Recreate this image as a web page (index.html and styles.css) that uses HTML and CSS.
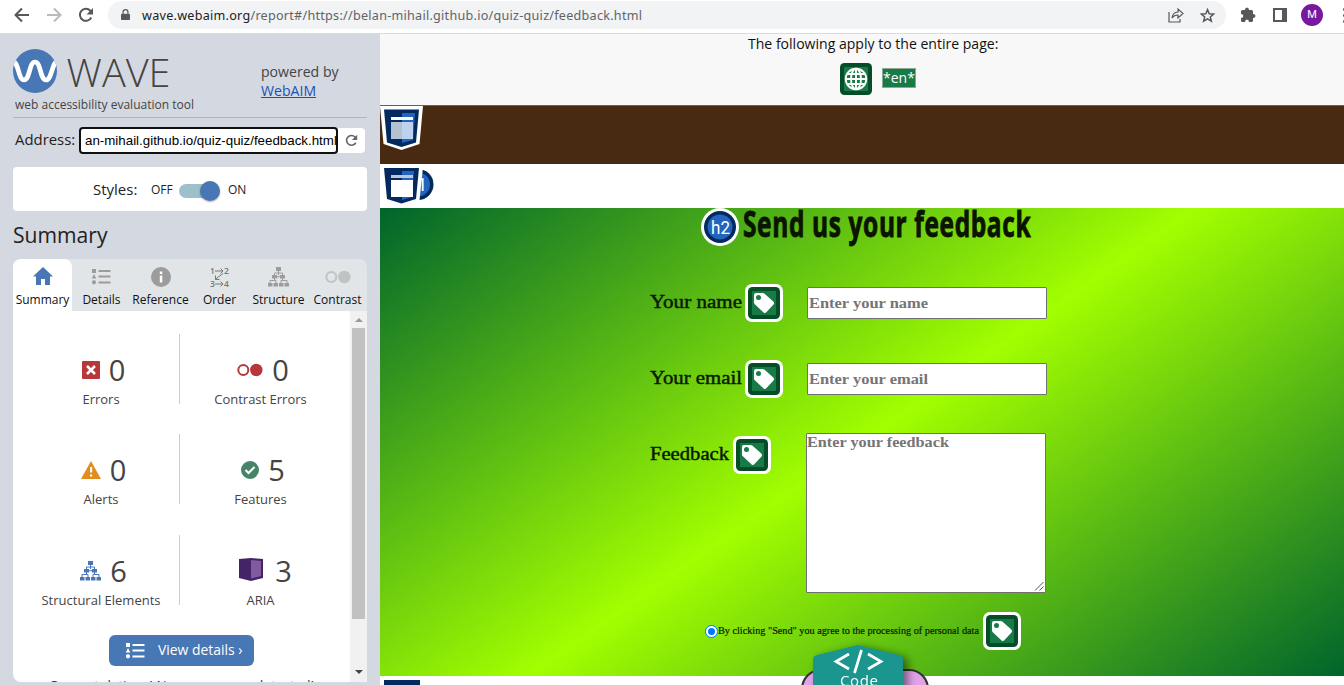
FILE: index.html
```html
<!DOCTYPE html>
<html lang="en">
<head>
<meta charset="utf-8">
<title>WAVE Report</title>
<link rel="stylesheet" href="styles.css">
</head>
<body>
<svg class="defs" width="0" height="0">
  <defs>
    <symbol id="list" viewBox="0 0 19 17"><path d="M0 1h4v4H0zM6.500 2h12v2h-12zM2 6l2.300 4.500H-.3zM6.500 7.500h12v2h-12zM6.500 13.500h12v2h-12z"/><circle cx="2" cy="14.300" r="2.100"/></symbol>
    <symbol id="tree" viewBox="0 0 21 20"><path d="M8 0h5v4H8zM4 8h5v3.500H4zM12 8h5v3.500h-5zM0 16h4.500v3.500H0zM5.500 16H10v3.500H5.500zM11 16h4.500v3.500H11zM16.500 16H21v3.500h-4.500z"/><path d="M10.500 4v4M6.500 8V6h8v2M6.500 11v3M14.500 11v3M2 16v-2.500h6V16M13 16v-2.500h6V16M8 9.700h5" fill="none" stroke="currentColor"/></symbol>
    <symbol id="pair" viewBox="0 0 26 14"><circle cx="6.300" cy="7" r="5" fill="none" stroke="currentColor" stroke-width="2"/><circle cx="19.300" cy="7" r="6.200"/></symbol>
    <symbol id="tag" viewBox="0 0 38 38"><rect width="38" height="38" rx="7" fill="#fff"/><rect x="3" y="3" width="32" height="32" rx="4.500" fill="#044d27"/><rect x="7" y="7" width="24" height="24" fill="#187a47"/><path fill="#fff" d="M9 11q0-2 2-2h6.500q1 0 1.800.6l9 8q1.500 1.400.2 2.800l-7.200 7.900q-1.200 1.300-2.700.2L9.800 20.300Q9 19.500 9 18.500z"/><circle cx="13.500" cy="13.500" r="2.500" fill="#187a47"/></symbol>
    <symbol id="back" viewBox="0 0 16 16"><path d="M15 8H2M8 1.500L1.500 8 8 14.500" fill="none" stroke="currentColor" stroke-width="2"/></symbol>
    <symbol id="reload" viewBox="0 0 16 16"><path d="M13.300 10.500A6 6 0 1 1 12.300 3.700L14 5.500" fill="none" stroke="currentColor" stroke-width="2"/><path d="M15 1v6.500H8.500z"/></symbol>
  </defs>
</svg>
<header class="chrome">
  <svg class="nav n1"><use href="#back"/></svg>
  <svg class="nav n2"><use href="#back"/></svg>
  <svg class="nav n3"><use href="#reload"/></svg>
  <div class="omnibox">
    <svg class="lock" viewBox="0 0 10 13"><path d="M1 5h8q1 0 1 1v5q0 1-1 1H1q-1 0-1-1V6q0-1 1-1z"/><path d="M2.300 5V3.300a2.700 2.700 0 0 1 5.400 0V5" fill="none" stroke="currentColor" stroke-width="1.400"/></svg>
    <svg class="url"><text x="0" y="15" textLength="500"><tspan fill="#202124">wave.webaim.org</tspan>/report#/https://belan-mihail.github.io/quiz-quiz/feedback.html</text></svg>
    <svg class="share" viewBox="0 0 16 15"><path d="M1 4v10h11v-3M4 10q.5-5.500 6-6V1l5 4.500-5 4.500V7Q6 7 4 10z" fill="none" stroke="currentColor" stroke-width="1.200"/></svg>
    <svg class="star" viewBox="0 0 14 14"><path d="M7 1.500l1.600 3.800 4.100.3-3.100 2.700 1 4L7 10.200l-3.600 2.100 1-4-3.100-2.700 4.100-.3z" fill="none" stroke="currentColor" stroke-width="1.400"/></svg>
  </div>
  <svg class="puzzle" viewBox="0 0 16 16"><path d="M1 4.500Q1 3 2.500 3H5q0-2.500 2-2.500T9 3h2.500Q13 3 13 4.500V7q2.500 0 2.500 2T13 11v2.500q0 1.500-1.500 1.500H9q0-2.500-2-2.500T5 15H2.500Q1 15 1 13.500V11q2.300 0 2.300-2T1 7z"/></svg>
  <svg class="panel" viewBox="0 0 14 14"><path fill-rule="evenodd" d="M0 0h14v14H0zM2 2v10h7V2z"/></svg>
  <span class="avatar">M</span>
  <span class="more"><i></i><i></i><i></i></span>
</header>
<div class="main">
<aside class="side">
  <div class="brand">
    <div>
      <svg class="logo" viewBox="0 0 158 44"><defs><clipPath id="disc"><circle cx="22" cy="22" r="22"/></clipPath></defs><circle cx="22" cy="22" r="22" fill="#4877b6"/><path clip-path="url(#disc)" d="M-1 12C6 12 5 31 11 31S16 13 22 13s5 18 11 18 6-19 12-19" fill="none" stroke="#fff" stroke-width="4.700"/><text x="53.500" y="38" textLength="104" lengthAdjust="spacingAndGlyphs">WAVE</text></svg>
      <div class="tagline">web accessibility evaluation tool</div>
    </div>
    <div class="powered">powered by<br><a>WebAIM</a></div>
  </div>
  <div class="address"><span class="alabel">Address:</span><span class="field"><span>an-mihail.github.io/quiz-quiz/feedback.html</span></span><span class="go"><svg><use href="#reload"/></svg></span></div>
  <div class="styles"><span class="slabel">Styles:</span><span class="off">OFF</span><span class="switch"><i></i></span><span class="on">ON</span></div>
  <h1>Summary</h1>
  <nav class="tabs">
    <div class="tab active"><svg viewBox="0 0 20 18" width="20" height="18"><path d="M10 0l10 9.500h-3V18h-5v-6H8v6H3V9.500H0z"/></svg><span>Summary</span></div>
    <div class="tab"><svg width="19" height="17"><use href="#list"/></svg><span>Details</span></div>
    <div class="tab"><svg viewBox="0 0 20 20" width="20" height="20"><circle cx="10" cy="10" r="10"/><path d="M8.800 4.500h2.500V7H8.800zM8.800 8.500h2.500v7H8.800z" fill="#fff"/></svg><span>Reference</span></div>
    <div class="tab"><svg class="order" viewBox="0 0 20 20" width="20" height="20"><text x="0" y="7">1</text><text x="14" y="7">2</text><text x="0" y="20">3</text><text x="14" y="20">4</text><path d="M5 4h8M10.500 1.500L13 4l-2.500 2.500M5 17h8M10.500 14.500L13 17l-2.500 2.500M13 6.500l-8 6M5.500 8.500v4h4" fill="none" stroke="currentColor"/></svg><span>Order</span></div>
    <div class="tab"><svg width="21" height="20"><use href="#tree"/></svg><span>Structure</span></div>
    <div class="tab pale"><svg width="26" height="14"><use href="#pair"/></svg><span>Contrast</span></div>
  </nav>
  <div class="pane">
    <div class="content">
      <div class="grid">
        <div class="cell"><div class="num"><svg viewBox="0 0 18 18" width="18" height="18"><rect width="18" height="18" rx="1" fill="#b8373b"/><path d="M5 5l8 8M13 5l-8 8" stroke="#fff" stroke-width="2.500"/></svg><b>0</b></div><p>Errors</p></div>
        <div class="cell"><div class="num red"><svg width="26" height="14"><use href="#pair"/></svg><b>0</b></div><p>Contrast Errors</p></div>
        <div class="cell"><div class="num"><svg viewBox="0 0 20 18" width="20" height="18"><path d="M10 0l10 18H0z" fill="#e08c1e"/><path d="M9 6h2.200v5.500H9zM9 13.500h2.200v2H9z" fill="#fff"/></svg><b>0</b></div><p>Alerts</p></div>
        <div class="cell"><div class="num"><svg viewBox="0 0 18 18" width="18" height="18"><circle cx="9" cy="9" r="9" fill="#478467"/><path d="M4.500 9l3 3 6-6" fill="none" stroke="#fff" stroke-width="2"/></svg><b>5</b></div><p>Features</p></div>
        <div class="cell last"><div class="num blue"><svg width="21" height="20"><use href="#tree"/></svg><b>6</b></div><p>Structural Elements</p></div>
        <div class="cell last"><div class="num aria"><svg viewBox="0 0 24 23" width="24" height="23"><path d="M0 1L12 0l12 1v19l-12 3-12-3z" fill="#452368"/><path d="M12 2l10 1v15l-10 2.500z" fill="#805b9e"/></svg><b>3</b></div><p>ARIA</p></div>
      </div>
      <div class="view"><svg width="19" height="17"><use href="#list"/></svg><span>View details ›</span></div>
      <div class="congrats">Congratulations! No errors were detected!</div>
    </div>
    <div class="bar"><i class="up"></i><i class="thumb"></i><i class="down"></i></div>
  </div>
</aside>
<main class="page">
  <section class="info">
    <div class="note">The following apply to the entire page:</div>
    <div class="lang"><svg viewBox="0 0 32 32" width="32" height="32"><rect width="32" height="32" rx="4.500" fill="#044d27"/><path d="M4 4h24v24H4z" fill="#187a47"/><g fill="none" stroke="#fff" stroke-width="1.900"><circle cx="16" cy="16" r="10.300"/><ellipse cx="16" cy="16" rx="5" ry="10.300"/><path d="M16 5.500v21M5.500 16h21M7 11h18M7 21h18"/></g></svg><span>*en*</span></div>
  </section>
  <section class="brown"><svg class="shield" viewBox="0 0 43 44" width="43" height="44"><path d="M0 0h43l-3.500 38L21.500 44 3.500 38z" fill="#fff"/><path d="M4 3.500h35l-3 33L21.500 41 7 36.500z" fill="#03295e"/><path d="M22 7h13l-2 27-11 3z" fill="#2265bf"/><path d="M11 11h22v3H11z" fill="#fff"/><path d="M11 16h11v17H11z" fill="#b5c0d1"/><path d="M22 16h11v17H22z" fill="#bcd2ef"/></svg></section>
  <section class="blank"><svg class="shield2" viewBox="0 0 52 38" width="52" height="38"><circle cx="35" cy="17.500" r="15.500" fill="#03295e"/><circle cx="35" cy="17.500" r="12" fill="#2265bf"/><text x="24" y="24">h1</text><path d="M0 0h40l-4 38H0z" fill="#fff"/><path d="M1 1h35l-3 31-14.500 4.500L4 32z" fill="#03295e"/><path d="M19 4h12l-2 26-10 3z" fill="#2265bf"/><path d="M8 8h22v3H8z" fill="#b8c7df"/><path d="M8 13h22v17H8z" fill="#fff"/></svg></section>
  <section class="green">
    <div class="title"><svg class="h2" viewBox="0 0 38 38" width="38" height="38"><circle cx="19" cy="19" r="19" fill="#fff"/><circle cx="19" cy="19" r="16" fill="#03295e"/><circle cx="19" cy="19" r="12.500" fill="#2265bf"/><text x="10" y="25.500" textLength="19" lengthAdjust="spacingAndGlyphs">h2</text></svg><svg class="heading" width="292" height="44"><text transform="scale(.7 1)" x="0" y="29" textLength="411">Send us your feedback</text></svg></div>
    <div class="row r1"><div class="label"><svg class="lt" width="92" height="24"><text x="0" y="18" textLength="92" lengthAdjust="spacingAndGlyphs">Your name</text></svg><svg class="tag"><use href="#tag"/></svg></div><div class="input"><svg width="200" height="24"><text x="1" y="17" textLength="119" lengthAdjust="spacingAndGlyphs">Enter your name</text></svg></div></div>
    <div class="row r2"><div class="label"><svg class="lt" width="92" height="24"><text x="0" y="18" textLength="92" lengthAdjust="spacingAndGlyphs">Your email</text></svg><svg class="tag"><use href="#tag"/></svg></div><div class="input"><svg width="200" height="24"><text x="1" y="17" textLength="119" lengthAdjust="spacingAndGlyphs">Enter your email</text></svg></div></div>
    <div class="row r3"><div class="label"><svg class="lt" width="80" height="24"><text x="0" y="18" textLength="79" lengthAdjust="spacingAndGlyphs">Feedback</text></svg><svg class="tag"><use href="#tag"/></svg></div><div class="input area"><svg width="200" height="24"><text x="0" y="13" textLength="142" lengthAdjust="spacingAndGlyphs">Enter your feedback</text></svg><svg class="grip" width="9" height="9"><path d="M0 8.500L8.500 0M4.500 8.500l4-4" stroke="#555"/></svg></div></div>
    <div class="consent"><span class="radio"><i></i></span><svg class="agree" width="262" height="18"><text x="0" y="11.500" textLength="261" lengthAdjust="spacingAndGlyphs">By clicking "Send" you agree to the processing of personal data</text></svg><svg class="tag"><use href="#tag"/></svg></div>
  </section>
  <section class="below"><svg class="shield3" width="38" height="5"><path d="M4 0h36v5H4z" fill="#03295e"/></svg></section>
  <div class="send"></div>
  <svg class="code" viewBox="0 0 110 46" width="110" height="46"><path d="M2 14q0-3 4-4L47 0l41 10q4 1 4 4v32H2z" fill="#1a968f"/><path d="M38 9l-13 7.500L38 24M57 9l13 7.500L57 24M50.500 5L43.500 28" fill="none" stroke="#fff" stroke-width="2.700"/><text x="29" y="41" textLength="38">Code</text></svg>
</main>
</div>
</body>
</html>
```
FILE: styles.css
```css
* { box-sizing: border-box; }
body { margin: 0; width: 1344px; height: 685px; overflow: hidden; font-family: "Open Sans", sans-serif; color: #333; }
svg { display: block; flex: none; fill: currentColor; overflow: visible; }
.defs { position: absolute; }
i { display: block; }
.chrome { height: 34px; display: flex; align-items: center; background: #fff; border-bottom: 1px solid #d9dbde; color: #55585c; padding: 0 0 3px 14px; overflow: hidden; }
.nav { width: 16px; height: 16px; }
.n2 { margin-left: 16px; color: #bbb; transform: scaleX(-1); }
.n3 { margin-left: 16px; }
.omnibox { width: 1118px; height: 28px; flex: none; margin-left: 14px; margin-top: 1px; border-radius: 14px; background: #f1f3f4; display: flex; align-items: center; padding-left: 13px; margin-right: 14px; margin-bottom: 1px; }
.lock { width: 9px; height: 12px; }
.url { width: 500px; height: 20px; margin-left: 12px; font-family: "Noto Sans", sans-serif; fill: #5f6368; }
.url text { font-size: 12.600px; }
.share { width: 16px; height: 15px; margin-left: 526px; }
.star { width: 15px; height: 15px; margin-left: 16px; }
.puzzle { width: 16px; height: 16px; }
.panel { width: 14px; height: 14px; margin-left: 17px; }
.avatar { flex: none; width: 22px; height: 22px; margin-left: 14px; border-radius: 50%; background: #7719a0; color: #fff; font: 11px/22px Roboto, sans-serif; text-align: center; }
.more { margin-left: 20px; display: grid; gap: 3px; }
.more i { width: 3px; height: 3px; background: #55585c; border-radius: 50%; }
.main { display: flex; height: 651px; }
.side { width: 380px; flex: none; background: #d4d8e0; padding: 15px 13px 0; }
.brand { width: 354px; height: 69px; display: flex; border-bottom: 1px solid #b0b5bd; }
.brand > div:first-child { width: 248px; }
.logo { width: 158px; height: 44px; color: #444; font-size: 39px; font-weight: 300; }
.tagline { font-size: 12px; line-height: 16px; margin: 4px 0 0 2px; color: #444; }
.powered { font-size: 14.100px; line-height: 19px; padding-top: 13px; color: #444; }
.powered a { color: #1d50b5; text-decoration: underline; }
.address { height: 27px; margin-top: 9px; display: flex; align-items: center; width: 352px; }
.alabel { font-size: 14.900px; width: 66px; padding-left: 2px; white-space: nowrap; color: #222; margin-top: -3px; }
.field { width: 259px; height: 27px; border: 2px solid #101010; border-radius: 4px; background: #fff; padding-left: 4px; overflow: hidden; font: 13.330px/23px "Liberation Sans", sans-serif; color: #000; white-space: nowrap; }
.go { height: 25px; flex: 1; background: #fff; border-radius: 0 4px 4px 0; padding: 6px 0 0 7px; color: #666; }
.go svg { width: 13px; height: 13px; }
.styles { margin-top: 13px; width: 354px; height: 44px; border-radius: 4px; background: #fff; display: flex; align-items: center; padding-left: 80px; font-size: 12px; color: #222; }
.slabel { font-size: 15px; width: 58px; }
.off { width: 28px; }
.switch { width: 40px; height: 14px; border-radius: 7px; background: #9dc0ca; margin-top: 3px; }
.switch i { width: 20px; height: 20px; border-radius: 50%; background: #4877b6; margin: -3px 0 0 21px; box-shadow: 0 1px 2px #0005; }
.on { margin-left: 9px; }
h1 { font-size: 21.100px; font-weight: 400; line-height: 28px; margin: 10px 0; color: #222; }
.tabs { width: 354px; height: 52px; background: #e1e5e7; border-radius: 8px 8px 0 0; display: flex; }
.tab { width: 59px; display: flex; flex-direction: column; justify-content: space-between; align-items: center; color: #9c9c9c; padding-bottom: 4px; }
.tab svg { margin: auto 0; position: relative; top: 1px; }
.tab span { font-size: 12px; line-height: 15px; color: #111; white-space: nowrap; }
.active { background: #fff; color: #4877b6; border-radius: 8px 8px 0 0; }
.active svg { top: 0; }
.pale { color: #c0c3c4; }
.order { font-size: 8.500px; font-weight: 600; color: #777; }
.pane { width: 354px; height: 371px; background: #fff; display: flex; overflow: hidden; border-radius: 0 0 0 8px; }
.content { width: 337px; }
.grid { display: grid; grid-template-columns: 159px 161px; padding: 23px 0 0 8px; row-gap: 30px; }
.cell { height: 70px; text-align: center; color: #444; padding-left: 2px; }
.cell:nth-child(odd) { border-right: 1px solid #ccc; }
.cell:nth-child(even) { padding-left: 0; }
.last { margin-top: 1px; }
.num { height: 40px; margin-top: 16px; display: flex; align-items: center; justify-content: center; gap: 9px; padding-left: 5px; }
.num b { font-size: 29px; font-weight: 400; line-height: 40px; color: #444; }
.cell p { margin: -1px 0 0; font-size: 13px; line-height: 20px; white-space: nowrap; }
.red { color: #b8373b; }
.blue { color: #4877b6; }
.aria { gap: 12px; padding-left: 10px; }
.aria svg { margin-top: -4px; }
.view { width: 145px; height: 31px; margin: 30px 0 0 96px; border-radius: 6px; background: #4877b6; color: #fff; display: flex; align-items: center; padding-left: 17px; gap: 13px; font-size: 13.900px; white-space: nowrap; }
.view span { margin-top: -2px; }
.congrats { font-size: 13.500px; line-height: 20px; text-align: center; margin-top: 9px; white-space: nowrap; }
.bar { width: 17px; background: #f1f1f1; display: flex; flex-direction: column; align-items: center; }
.up { border: 4px solid transparent; border-top: 0; border-bottom-color: #999; margin: 7px 0 6px; }
.thumb { width: 13px; height: 291px; background: #c1c1c1; }
.down { border: 4px solid transparent; border-bottom: 0; border-top-color: #444; margin-top: 51px; }
.page { position: relative; width: 964px; background: #fff; }
.info { height: 72px; background: #f8f8f8; border-bottom: 1px solid #5c6650; }
.note { font-size: 14.050px; line-height: 20px; color: #111; padding-left: 368px; }
.lang { display: flex; align-items: center; gap: 10px; margin: 9px 0 0 460px; }
.lang span { background: #187a47; color: #fff; font-size: 14px; line-height: 18px; height: 20px; border: 1px solid #8baa94; margin-top: -2px; }
.brown { height: 58px; background: #482a12; }
.shield { position: absolute; left: 0; top: 72px; }
.blank { height: 44px; background: #fff; }
.shield2 { position: absolute; left: 3px; top: 133px; font: 18px Roboto, sans-serif; }
.shield2 text, .h2 text { fill: #fff; }
.green { height: 468px; overflow: hidden; background: linear-gradient(145deg, #00642c, #a2ff00 50%, #00642c); color: #0a1a00; }
.title { display: flex; margin-left: 321px; gap: 4px; }
.h2 { font: 18px Roboto, sans-serif; }
.heading { font: 700 35px "Open Sans", sans-serif; color: #0b1400; stroke: #0b1400; stroke-width: .9px; }
.row { display: flex; margin-left: 270px; align-items: flex-start; }
.label { width: 157px; display: flex; gap: 3px; font-family: "Liberation Serif", serif; }
.tag { width: 38px; height: 38px; }
.lt { margin-top: 6px; stroke: currentColor; stroke-width: .45px; font-size: 18px; }
.r1 { margin-top: 32px; }
.r2, .r3 { margin-top: 38px; }
.input { width: 240px; height: 32px; margin-top: 3px; border: 1px solid #707070; background: #fff; color: #757575; font: 700 14.500px "Liberation Serif", serif; padding-top: 3px; border-radius: 1px; }
.area { height: 160px; margin: -3px 0 0 -1px; padding: 0; position: relative; }
.grip { position: absolute; right: 1px; bottom: 1px; }
.consent { display: flex; align-items: center; margin: 19px 0 0 325px; }
.radio { width: 13px; height: 13px; border-radius: 50%; background: #fff; border: 1px solid #0075ff; padding: 2px; }
.radio i { width: 7px; height: 7px; background: #0075ff; border-radius: 50%; margin: 0; }
.agree { font: 11px "Liberation Serif", serif; margin-right: 3px; stroke: currentColor; stroke-width: .2px; }
.below { height: 9px; background: #fff; }
.shield3 { position: absolute; left: 0; top: 646px; }
.send { position: absolute; left: 421px; top: 635px; width: 128px; height: 42px; background: #e2a2e8; border: 2px solid #333; border-radius: 20px; }
.code { position: absolute; left: 431px; top: 611px; font-size: 15px; filter: drop-shadow(5px 2px 4px #0007); }
.code text { fill: #fff; }
```
